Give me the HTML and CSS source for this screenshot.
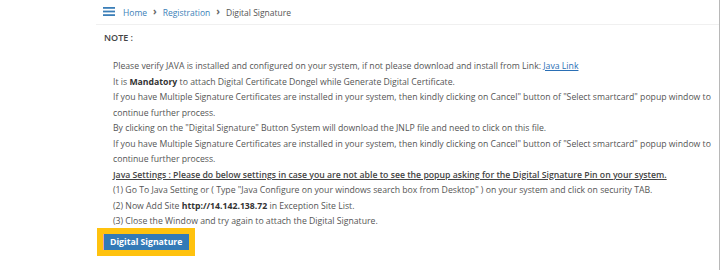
FILE: index.html
```html
<!DOCTYPE html>
<html lang="en">
<head>
    <meta charset="UTF-8">
    <title>Digital Signature</title>
    <link rel="stylesheet" href="styles.css">
</head>
<body>
    <div class="layout">
        <div class="sidebar"></div>
        <div class="content-wrapper">
            <div class="breadcrumb-bar">
                <span class="menu-toggle">
                    <svg width="12" height="9" viewBox="0 0 12 9"><rect x="0" y="0" width="12" height="1.8" fill="#3c7fb8"/><rect x="0" y="3.6" width="12" height="1.8" fill="#3c7fb8"/><rect x="0" y="7.2" width="12" height="1.8" fill="#3c7fb8"/></svg>
                </span>
                <a href="#" class="crumb">Home</a>
                <span class="crumb-sep">&#8250;</span>
                <a href="#" class="crumb">Registration</a>
                <span class="crumb-sep">&#8250;</span>
                <span class="crumb-active">Digital Signature</span>
            </div>
            <div class="panel">
                <div class="note-title">NOTE :</div>
                <ul class="note-list">
                    <li>Please verify JAVA is installed and configured on your system, if not please download and install from Link: <a href="#" class="java-link">Java Link</a></li>
                    <li>It is <b>Mandatory</b> to attach Digital Certificate Dongel while Generate Digital Certificate.</li>
                    <li>If you have Multiple Signature Certificates are installed in your system, then kindly clicking on Cancel" button of "Select smartcard" popup window to continue further process.</li>
                    <li>By clicking on the "Digital Signature" Button System will download the JNLP file and need to click on this file.</li>
                    <li>If you have Multiple Signature Certificates are installed in your system, then kindly clicking on Cancel" button of "Select smartcard" popup window to continue further process.</li>
                    <li class="java-settings">Java Settings : Please do below settings in case you are not able to see the popup asking for the Digital Signature Pin on your system.</li>
                    <li>(1) Go To Java Setting or ( Type "Java Configure on your windows search box from Desktop" ) on your system and click on security TAB.</li>
                    <li>(2) Now Add Site <b>http://14.142.138.72</b> in Exception Site List.</li>
                    <li>(3) Close the Window and try again to attach the Digital Signature.</li>
                </ul>
                <div class="actions">
                    <span class="focus-ring"><button class="btn-sign">Digital Signature</button></span>
                </div>
            </div>
        </div>
    </div>
</body>
</html>
```

FILE: styles.css
```css
body {
    margin: 0;
    padding: 0;
    background: #ffffff;
    font-family: 'Open Sans', sans-serif;
    font-size: 8.7px;
    color: #555555;
}

.layout {
    display: flex;
    height: 270px;
}

.sidebar {
    width: 96px;
    flex-shrink: 0;
}

.content-wrapper {
    flex: 1;
    border-right: 1px solid #b8b8b8;
}

.breadcrumb-bar {
    display: flex;
    align-items: center;
    height: 25px;
    padding-left: 7px;
    border-bottom: 1px solid #f0f0f0;
    box-sizing: border-box;
}

.menu-toggle {
    display: flex;
    margin-right: 8px;
    margin-top: -1px;
}

.crumb {
    color: #3c7fb8;
    text-decoration: none;
    font-size: 8.5px;
}

.crumb-sep {
    color: #666666;
    font-size: 10px;
    font-weight: 700;
    margin: -2px 6px 0 6px;
}

.crumb-active {
    color: #555555;
    font-size: 8.5px;
}

.panel {
    padding: 5px 0 0 8px;
}

.note-title {
    font-weight: 600;
    color: #444444;
    font-size: 9px;
    line-height: 16px;
}

.note-list {
    list-style: none;
    margin: 13px 0 0 0;
    padding: 0 0 0 9px;
    line-height: 15.5px;
}

.note-list b {
    color: #333333;
}

.java-link {
    color: #2a6fb5;
    text-decoration: underline;
}

.java-settings {
    font-weight: 600;
    color: #444444;
    text-decoration: underline;
}

.actions {
    display: flex;
    margin-top: -2px;
    margin-left: -7px;
}

.focus-ring {
    display: flex;
    border: 6px solid #ffc20e;
}

.btn-sign {
    display: block;
    margin: 0;
    padding: 0 7px 0 6px;
    height: 16px;
    border: none;
    border-left: 1px solid #e8a0b0;
    background: #337ab7;
    color: #ffffff;
    font-family: 'Open Sans', sans-serif;
    font-size: 8.7px;
    font-weight: 700;
    line-height: 16px;
}
```
